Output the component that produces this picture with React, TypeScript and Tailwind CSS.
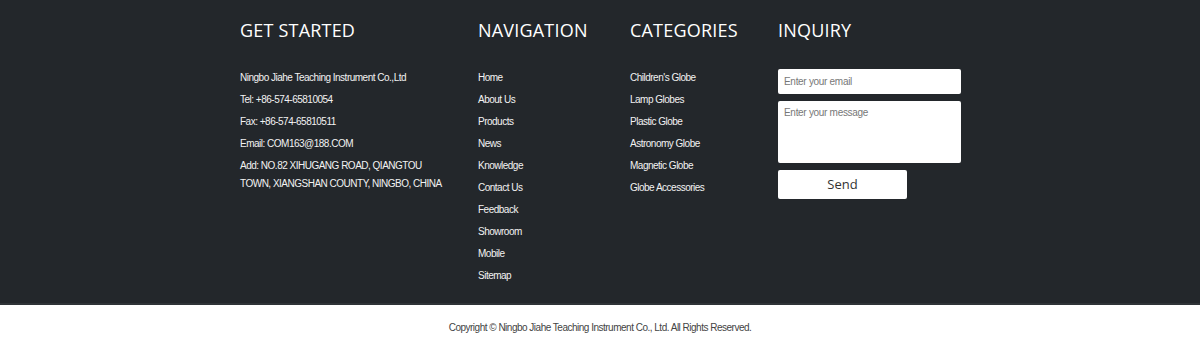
const info = [
  "Ningbo Jiahe Teaching Instrument Co.,Ltd",
  "Tel: +86-574-65810054",
  "Fax: +86-574-65810511",
  "Email: COM163@188.COM",
  "Add: NO.82 XIHUGANG ROAD, QIANGTOU TOWN, XIANGSHAN COUNTY, NINGBO, CHINA",
];

const nav = ["Home", "About Us", "Products", "News", "Knowledge", "Contact Us", "Feedback", "Showroom", "Mobile", "Sitemap"];

const categories = ["Children's Globe", "Lamp Globes", "Plastic Globe", "Astronomy Globe", "Magnetic Globe", "Globe Accessories"];

function Heading({ children }: { children: string }) {
  return (
    <h3 className="font-['Open_Sans',sans-serif] text-[18px] leading-[27px] tracking-[0.2px] text-white">
      {children}
    </h3>
  );
}

function LinkList({ items }: { items: string[] }) {
  return (
    <ul className="mt-[25px] flex flex-col">
      {items.map((item) => (
        <li key={item} className="mb-[4px] text-[10px] leading-[18px] tracking-[-0.5px] text-[#f2f2f2]">
          <a href="#">{item}</a>
        </li>
      ))}
    </ul>
  );
}

export default function App() {
  return (
    <div className="w-[1200px] font-['Liberation_Sans',Arial,sans-serif]">
      <footer className="border-b-2 border-[#2f3337] bg-[#23272b]">
        <div className="mx-auto flex w-[720px] pb-[14px] pt-[17px]">
          {/* Get started */}
          <div className="w-[238px]">
            <Heading>GET STARTED</Heading>
            <div className="mt-[25px] w-[205px]">
              {info.map((line) => (
                <p key={line} className="mb-[4px] text-[10px] leading-[18px] tracking-[-0.5px] text-[#f2f2f2]">
                  {line}
                </p>
              ))}
            </div>
          </div>

          {/* Navigation */}
          <div className="w-[152px]">
            <Heading>NAVIGATION</Heading>
            <LinkList items={nav} />
          </div>

          {/* Categories */}
          <div className="w-[148px]">
            <Heading>CATEGORIES</Heading>
            <LinkList items={categories} />
          </div>

          {/* Inquiry */}
          <div className="w-[182px]">
            <Heading>INQUIRY</Heading>
            <form className="mt-[25px] flex flex-col">
              <input
                type="text"
                placeholder="Enter your email"
                className="h-[25px] w-[183px] rounded-[2px] bg-white px-[6px] text-[10px] tracking-[-0.3px] text-[#333] outline-none placeholder:text-[#777]"
              />
              <textarea
                placeholder="Enter your message"
                className="mt-[7px] h-[62px] w-[183px] resize-none rounded-[2px] bg-white px-[6px] py-[5px] text-[10px] leading-[14px] tracking-[-0.3px] text-[#333] outline-none placeholder:text-[#777]"
              />
              <button
                type="button"
                className="mt-[7px] h-[29px] w-[129px] rounded-[2px] bg-white font-['Open_Sans',sans-serif] text-[13px] text-[#333]"
              >
                Send
              </button>
            </form>
          </div>
        </div>
      </footer>
      <div className="flex h-[41px] items-center justify-center bg-white pt-[4px] text-[10px] tracking-[-0.5px] text-[#444]">
        Copyright © Ningbo Jiahe Teaching Instrument Co., Ltd. All Rights Reserved.
      </div>
    </div>
  );
}
